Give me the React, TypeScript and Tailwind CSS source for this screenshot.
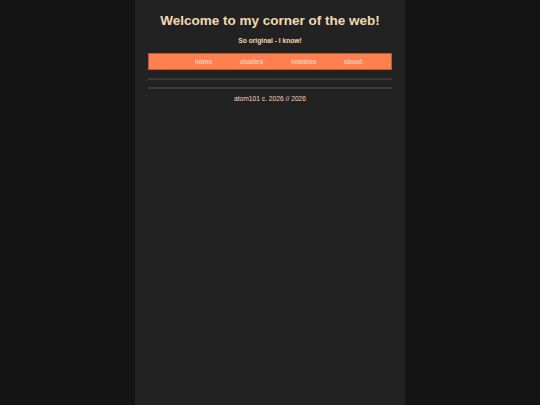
export default function App() {
  const links = ["home", "studies", "hobbies", "about"];
  return (
    <div className="min-h-screen w-full bg-[#141414]" style={{ fontFamily: '"Liberation Sans", Arial, sans-serif' }}>
      <div className="mx-auto min-h-screen w-[270px] bg-[#222222] px-[13px] pt-[13px]">
        <h1 className="text-center text-[13.5px] font-bold leading-[16px] text-[#f3d9b1]">
          Welcome to my corner of the web!
        </h1>
        <p className="mt-[8px] text-center text-[6.7px] font-bold leading-[8px] text-[#f3d9b1]">
          So original - I know!
        </p>
        <nav className="mt-[8px] flex h-[17px] items-center justify-center gap-[27.5px] border border-[#b85a36] bg-[#ff7f50] pl-[17px]">
          {links.map((l) => (
            <a key={l} className="text-[6.7px] font-bold leading-[8px] text-[#fbd0b4]">
              {l}
            </a>
          ))}
        </nav>
        <div className="mt-[8px] h-[2px] bg-[#3a3a3a]" />
        <div className="mt-[7px] h-[2px] bg-[#3a3a3a]" />
        <p className="mt-[6px] text-center text-[6.7px] leading-[8px] text-[#f3d9b1]">
          atom101 c. 2026 // 2026
        </p>
      </div>
    </div>
  );
}
